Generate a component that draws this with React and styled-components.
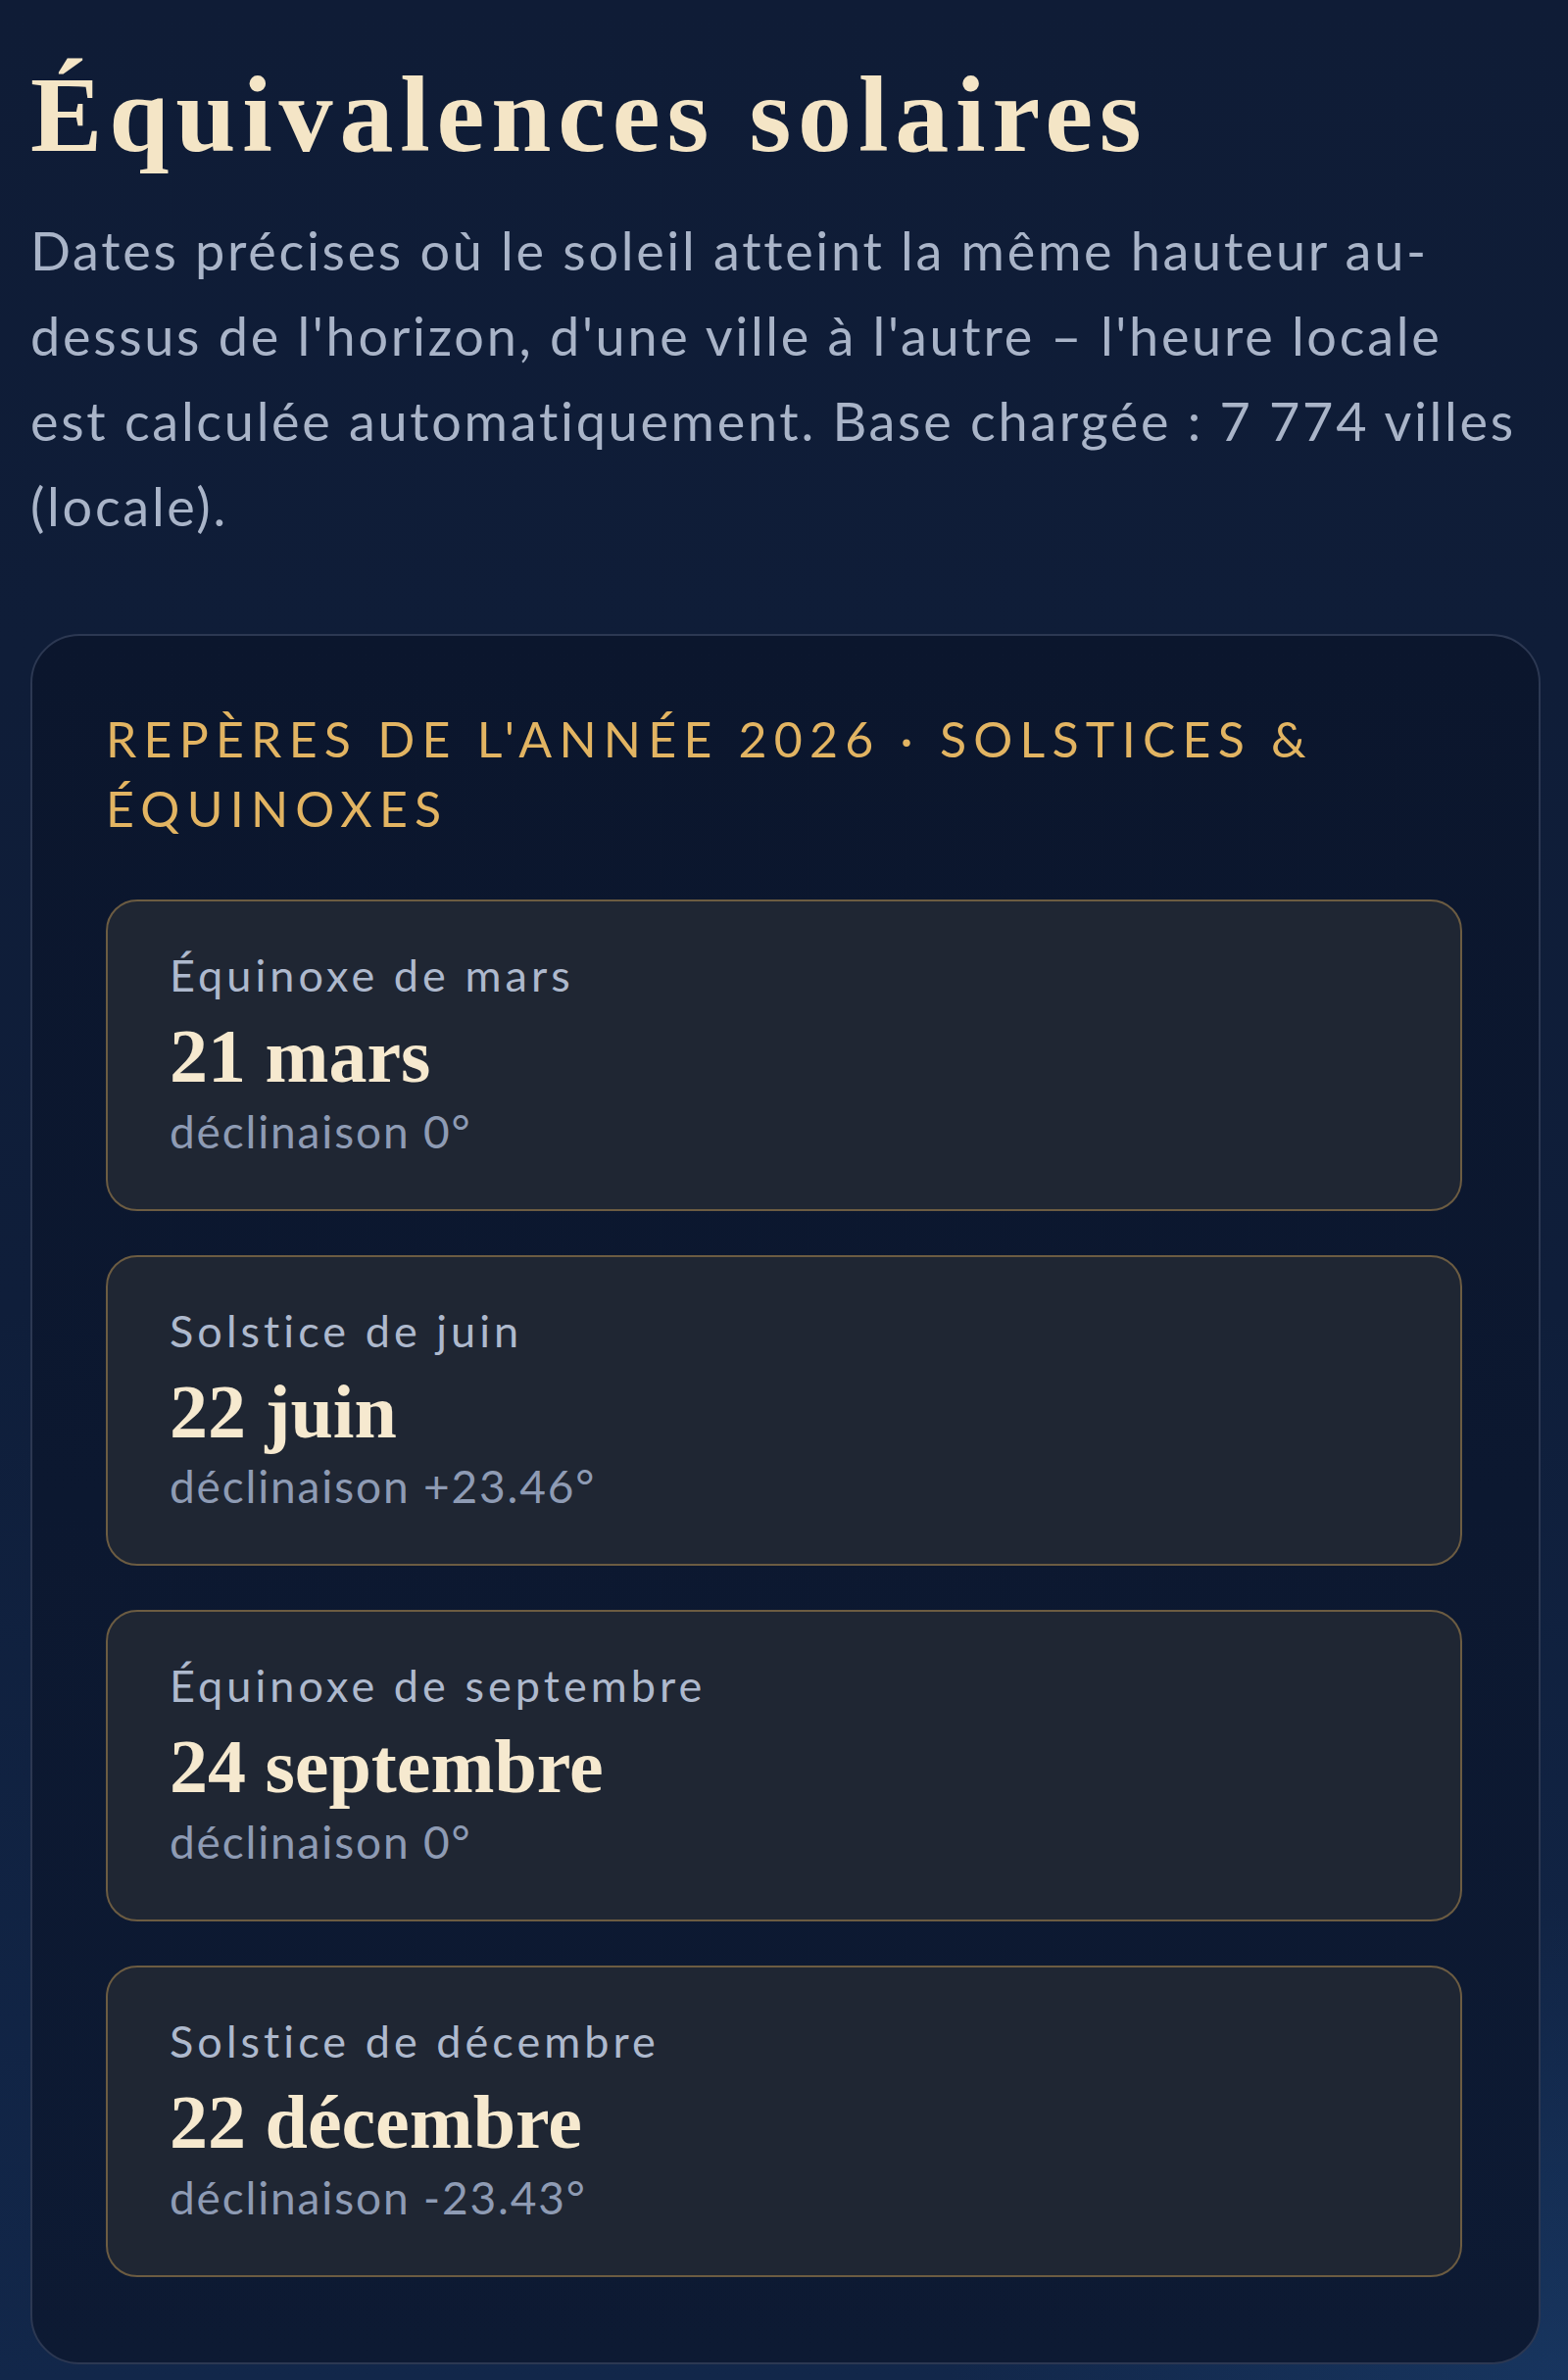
import React from 'react';
import styled, { createGlobalStyle } from 'styled-components';

const GlobalStyle = createGlobalStyle`
  html, body {
    margin: 0;
    padding: 0;
    background: #0f1c36;
  }
  * {
    box-sizing: border-box;
  }
`;

const reperes = [
  { label: 'Équinoxe de mars', date: '21 mars', decl: 'déclinaison 0°' },
  { label: 'Solstice de juin', date: '22 juin', decl: 'déclinaison +23.46°' },
  { label: 'Équinoxe de septembre', date: '24 septembre', decl: 'déclinaison 0°' },
  { label: 'Solstice de décembre', date: '22 décembre', decl: 'déclinaison -23.43°' },
];

const App = () => {
  return (
    <Page>
      <GlobalStyle />
      <Title>Équivalences solaires</Title>
      <Lead>
        Dates précises où le soleil atteint la même hauteur au-dessus de l'horizon,
        d'une ville à l'autre – l'heure locale est calculée automatiquement.
        Base chargée : 7{'\u00a0'}774 villes (locale).
      </Lead>

      <Panel>
        <PanelHeading>Repères de l'année 2026 · Solstices &amp; équinoxes</PanelHeading>
        <CardList>
          {reperes.map((item) => (
            <Card key={item.label}>
              <CardLabel>{item.label}</CardLabel>
              <CardDate>{item.date}</CardDate>
              <CardDecl>{item.decl}</CardDecl>
            </Card>
          ))}
        </CardList>
      </Panel>
    </Page>
  );
};

const Page = styled.main`
  min-height: 2429px;
  padding: 57px 28px 16px 31px;
  background:
    radial-gradient(ellipse 900px 700px at 100% 100%, rgba(30, 70, 120, 0.45), transparent 70%),
    linear-gradient(180deg, #0f1c36 0%, #0f1e3a 55%, #12274a 100%);
  font-family: Lato, 'Noto Sans', sans-serif;
  font-variant-ligatures: none;
`;

const Title = styled.h1`
  margin: 0;
  font-family: 'Liberation Serif', 'Times New Roman', serif;
  font-weight: 700;
  font-size: 110px;
  line-height: 1.1;
  letter-spacing: 0.062em;
  color: #f4e5c6;
`;

const Lead = styled.p`
  margin: 34px 0 0;
  padding-right: 10px;
  font-size: 54px;
  line-height: 87px;
  letter-spacing: 0.05em;
  color: #a9b4c8;
`;

const Panel = styled.section`
  margin-top: 87px;
  padding: 70px 78px 87px 75px;
  border: 2px solid #2c3852;
  border-radius: 50px;
  background: linear-gradient(180deg, #0b162d 0%, #0d1a33 100%);
`;

const PanelHeading = styled.h2`
  margin: 0;
  font-size: 50px;
  font-weight: 400;
  line-height: 71px;
  letter-spacing: 0.145em;
  text-transform: uppercase;
  color: #e2b462;
`;

const CardList = styled.div`
  display: flex;
  flex-direction: column;
  gap: 45px;
  margin-top: 57px;
`;

const Card = styled.article`
  padding: 44px 60px 48px 63px;
  border: 2px solid #6c5c42;
  border-radius: 32px;
  background: #1f2633;
`;

const CardLabel = styled.div`
  font-size: 45px;
  line-height: 63px;
  letter-spacing: 0.09em;
  color: #aeb9cd;
`;

const CardDate = styled.div`
  margin-top: 6px;
  font-family: 'Liberation Serif', 'Times New Roman', serif;
  font-weight: 700;
  font-size: 78px;
  line-height: 1.15;
  color: #f6e9cf;
`;

const CardDecl = styled.div`
  font-size: 46px;
  line-height: 63px;
  letter-spacing: 0.04em;
  color: #8e9bb4;
`;

export default App;
